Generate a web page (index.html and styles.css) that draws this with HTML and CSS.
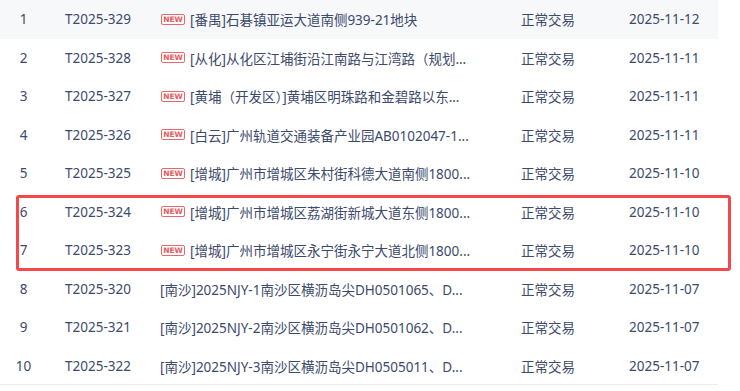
FILE: index.html
```html
<!DOCTYPE html>
<html lang="zh-CN">
<head>
<meta charset="utf-8">
<link rel="stylesheet" href="styles.css">
</head>
<body>
<div class="board">
  <div class="table">
    <div class="row first">
      <div class="c-no">1</div><div class="c-code">T2025-329</div>
      <div class="c-name"><span class="new">NEW</span><span class="txt">[番禺]石碁镇亚运大道南侧939-21地块</span></div>
      <div class="c-state">正常交易</div><div class="c-date">2025-11-12</div>
    </div>
    <div class="row">
      <div class="c-no">2</div><div class="c-code">T2025-328</div>
      <div class="c-name"><span class="new">NEW</span><span class="txt">[从化]从化区江埔街沿江南路与江湾路（规划...</span></div>
      <div class="c-state">正常交易</div><div class="c-date">2025-11-11</div>
    </div>
    <div class="row">
      <div class="c-no">3</div><div class="c-code">T2025-327</div>
      <div class="c-name"><span class="new">NEW</span><span class="txt">[黄埔（开发区）]黄埔区明珠路和金碧路以东...</span></div>
      <div class="c-state">正常交易</div><div class="c-date">2025-11-11</div>
    </div>
    <div class="row">
      <div class="c-no">4</div><div class="c-code">T2025-326</div>
      <div class="c-name"><span class="new">NEW</span><span class="txt">[白云]广州轨道交通装备产业园AB0102047-1...</span></div>
      <div class="c-state">正常交易</div><div class="c-date">2025-11-11</div>
    </div>
    <div class="row">
      <div class="c-no">5</div><div class="c-code">T2025-325</div>
      <div class="c-name"><span class="new">NEW</span><span class="txt">[增城]广州市增城区朱村街科德大道南侧1800...</span></div>
      <div class="c-state">正常交易</div><div class="c-date">2025-11-10</div>
    </div>
    <div class="row">
      <div class="c-no">6</div><div class="c-code">T2025-324</div>
      <div class="c-name"><span class="new">NEW</span><span class="txt">[增城]广州市增城区荔湖街新城大道东侧1800...</span></div>
      <div class="c-state">正常交易</div><div class="c-date">2025-11-10</div>
    </div>
    <div class="row">
      <div class="c-no">7</div><div class="c-code">T2025-323</div>
      <div class="c-name"><span class="new">NEW</span><span class="txt">[增城]广州市增城区永宁街永宁大道北侧1800...</span></div>
      <div class="c-state">正常交易</div><div class="c-date">2025-11-10</div>
    </div>
    <div class="row">
      <div class="c-no">8</div><div class="c-code">T2025-320</div>
      <div class="c-name"><span class="txt">[南沙]2025NJY-1南沙区横沥岛尖DH0501065、D...</span></div>
      <div class="c-state">正常交易</div><div class="c-date">2025-11-07</div>
    </div>
    <div class="row">
      <div class="c-no">9</div><div class="c-code">T2025-321</div>
      <div class="c-name"><span class="txt">[南沙]2025NJY-2南沙区横沥岛尖DH0501062、D...</span></div>
      <div class="c-state">正常交易</div><div class="c-date">2025-11-07</div>
    </div>
    <div class="row last">
      <div class="c-no">10</div><div class="c-code">T2025-322</div>
      <div class="c-name"><span class="txt">[南沙]2025NJY-3南沙区横沥岛尖DH0505011、D...</span></div>
      <div class="c-state">正常交易</div><div class="c-date">2025-11-07</div>
    </div>
  </div>
  <div class="highlight"></div>
</div>
</body>
</html>
```

FILE: styles.css
```css
html, body {
  margin: 0;
  padding: 0;
  background: #ffffff;
}
.board {
  position: relative;
  width: 740px;
  height: 391px;
  overflow: hidden;
}
.table {
  width: 718px;
  font-family: "Noto Sans", "Noto Sans CJK SC", sans-serif;
  font-size: 13.5px;
  color: #3c4a6c;
}
.row {
  display: grid;
  grid-template-columns: 46px 114px 361px 108px 89px;
  grid-template-rows: 38.5px;
  align-items: center;
}
.row.first {
  background: #f7f8fa;
}
.row.last {
  border-bottom: 1px solid #e9ebf2;
  height: 38.5px;
  box-sizing: border-box;
}
.c-no {
  text-align: center;
  padding-left: 1px;
}
.c-code {
  padding-left: 19px;
}
.c-name {
  display: flex;
  align-items: center;
  min-width: 0;
  padding-right: 20px;
}
.txt {
  white-space: nowrap;
  overflow: hidden;
  text-overflow: ellipsis;
  min-width: 0;
}
.new {
  flex: none;
  box-sizing: border-box;
  width: 24px;
  height: 11px;
  margin: 0 5px 0 1px;
  border: 1px solid #e66a6c;
  border-radius: 2px;
  color: #e35c5e;
  font-family: "DejaVu Sans", sans-serif;
  font-size: 7.5px;
  font-weight: bold;
  line-height: 9px;
  text-align: center;
}
.highlight {
  position: absolute;
  left: 16px;
  top: 195px;
  width: 715px;
  height: 76px;
  box-sizing: border-box;
  border: 3px solid #f5484c;
  border-radius: 3px;
}
```
